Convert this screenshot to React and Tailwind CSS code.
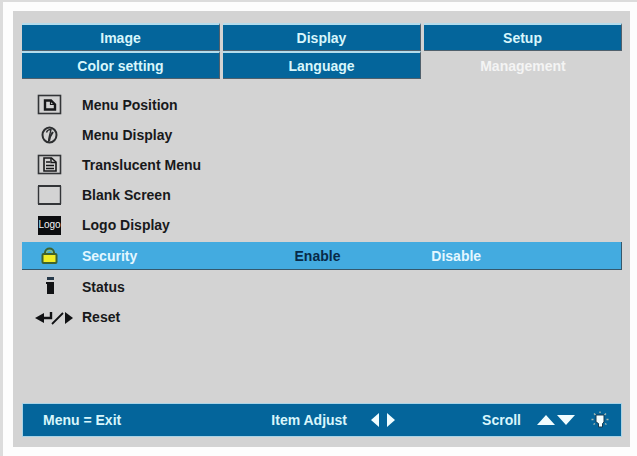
import clsx from "clsx";

const tabs = ["Image", "Display", "Setup", "Color setting", "Language", "Management"];

const PositionIcon = () => (
  <g fill="none" stroke="#333538">
    <rect x="4.5" y="2.5" width="22" height="18" strokeWidth="1.6" />
    <path d="M11 7.5h6l4 4v5H11z" stroke="#18191b" strokeWidth="2.4" />
    <path d="M16.5 7v4.5H21" stroke="#18191b" strokeWidth="1.2" />
  </g>
);

const DisplayIcon = () => (
  <g fill="none" stroke="#2c2e30">
    <ellipse cx="15.5" cy="12" rx="7" ry="7.5" strokeWidth="2" />
    <path d="M12.5 9.5c.5-2 2-3 4.500-3-.5 3-2 6-2.500 12.500" strokeWidth="1.4" />
    <path d="M19 9c-1.500 2-3 3-4 9" strokeWidth="2" />
  </g>
);

const TranslucentIcon = () => (
  <g fill="none" stroke="#333538">
    <rect x="4.5" y="2.5" width="22" height="18" strokeWidth="1.6" />
    <path d="M10 5h7.5L22 9v9H10z" stroke="#18191b" strokeWidth="1.6" />
    <path d="M17 5v4.5h5M12 9h4M12 12.5h8M12 15.5h8" stroke="#18191b" strokeWidth="1.4" />
  </g>
);

const BlankIcon = () => (
  <g fill="none" stroke="#333538">
    <path d="M4.5 3v18M26.5 3v18" strokeWidth="1.4" />
    <path d="M4 3h23M4 21h23" strokeWidth="2" />
  </g>
);

const LogoIcon = () => (
  <g>
    <rect x="4" y="3" width="23" height="19" fill="#0c0d0f" />
    <text x="15.5" y="15" textAnchor="middle" fill="#f2f2f2" fontSize="10" fontWeight="400">
      Logo
    </text>
  </g>
);

const LockIcon = () => (
  <g>
    <path d="M11 11V8.5a4.5 4 0 0 1 9 0V11" fill="none" stroke="#3f642d" strokeWidth="2" />
    <path d="M12.5 10V9a3 2.5 0 0 1 6 0v1" fill="none" stroke="#a9c95a" />
    <rect x="8.5" y="10" width="14" height="9" rx="1" fill="#efee27" stroke="#3f642d" strokeWidth="2" />
  </g>
);

const StatusIcon = () => (
  <g>
    <rect x="13" y="2" width="7" height="3" fill="#26394a" />
    <path d="M12 7h8v12h-7V9h-1z" fill="#111214" />
  </g>
);

const ResetIcon = () => (
  <g fill="#111214">
    <path d="M1 13l9-5v10z" />
    <path d="M8 13h9V7" fill="none" stroke="#111214" strokeWidth="2.4" />
    <path d="M18 19L29 8" fill="none" stroke="#111214" strokeWidth="1.8" />
    <path d="M31 7l8 6-8 6z" />
  </g>
);

const items = [
  { label: "Menu Position", Icon: PositionIcon },
  { label: "Menu Display", Icon: DisplayIcon },
  { label: "Translucent Menu", Icon: TranslucentIcon },
  { label: "Blank Screen", Icon: BlankIcon },
  { label: "Logo Display", Icon: LogoIcon },
  { label: "Security", Icon: LockIcon, options: ["Enable", "Disable"] },
  { label: "Status", Icon: StatusIcon },
  { label: "Reset", Icon: ResetIcon },
];

const Tab = ({ label, active }) => (
  <button
    type="button"
    role="tab"
    aria-selected={active}
    className={clsx(
      "h-7 border-t-2 text-center",
      active
        ? "border-transparent text-[#f4f4f4]"
        : "border-r border-b border-t-[#b4dcec] border-r-[#50606c] border-b-[#50606c] bg-[#04659b] text-[#d8f6fb]"
    )}
  >
    {label}
  </button>
);

const MenuRow = ({ label, Icon, options }) => (
  <li
    className={clsx(
      "grid grid-cols-3 items-center gap-x-[3px]",
      options
        ? "my-[2px] h-7 border-r border-b border-[#35586c] bg-[#43abe0] text-[#e4f7ff]"
        : "h-[30px] text-[#18191b]"
    )}
  >
    <button type="button" className="flex items-center gap-2 pl-3 text-left">
      <svg width="40" height="24" viewBox="0 0 40 24" aria-hidden="true">
        <Icon />
      </svg>
      {label}
    </button>
    {options && (
      <>
        <button type="button" className="pr-2 text-center text-[#082a48]">
          {options[0]}
        </button>
        <button type="button" className="pl-2 text-left">
          {options[1]}
        </button>
      </>
    )}
  </li>
);

const Footer = () => (
  <footer className="mt-[71px] grid h-[34px] grid-cols-3 items-center gap-x-[3px] border border-[#a9d3e6] bg-[#04659b] text-[#d8f6fb]">
    <span className="pl-5">Menu = Exit</span>
    <div className="flex items-center gap-6 pl-12">
      Item Adjust
      <svg width="24" height="14" viewBox="0 0 24 14" fill="#f0fdff" aria-hidden="true">
        <path d="M8 0v14L0 7zM16 0v14l8-7z" />
      </svg>
    </div>
    <div className="flex items-center justify-end gap-4 pr-3">
      Scroll
      <svg width="38" height="12" viewBox="0 0 38 12" fill="#f0fdff" aria-hidden="true">
        <path d="M0 11L9 1l9 10zM20 1h18l-9 10z" />
      </svg>
      <svg width="18" height="18" viewBox="0 0 18 18" aria-hidden="true">
        <path
          d="M9 .5V2M3 2.500l1.500 1.500M15 2.500L13.500 4M.5 8.500h2M15.500 8.500h2M2.500 13.500L4 12.500M15.500 13.500L14 12.500"
          stroke="#a9b9ae"
          strokeWidth="1.4"
        />
        <path d="M5 4h8v7l-1.500 1.500V16h-4v-3.500L5 11z" fill="#f6ffff" stroke="#16394f" strokeWidth="1" />
      </svg>
    </div>
  </footer>
);

const App = () => {
  return (
    <div className="min-h-screen border-t-2 border-l-[3px] border-t-[#dcdcdc] border-l-[#dcdcdc] bg-[#fdfdfd] pt-[9px] pr-[7px] pb-[9px] pl-[10px] font-['Liberation_Sans',Arial,sans-serif] text-sm font-bold">
      <main className="bg-[#d3d3d3] pt-3 pr-2 pb-[10px] pl-[9px]">
        <div role="tablist" className="grid grid-cols-3 gap-x-[3px]">
          {tabs.map((tab) => (
            <Tab key={tab} label={tab} active={tab === "Management"} />
          ))}
        </div>
        <ul className="mt-[11px]">
          {items.map((item) => (
            <MenuRow key={item.label} {...item} />
          ))}
        </ul>
        <Footer />
      </main>
    </div>
  );
};

export default App;
